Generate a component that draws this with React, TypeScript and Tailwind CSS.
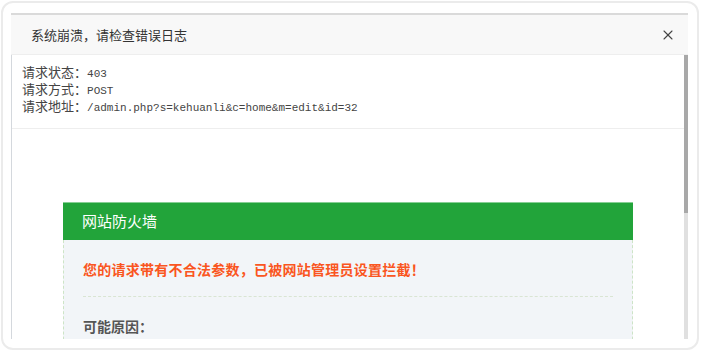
import { X } from "lucide-react";

const cjk = "font-['Noto_Sans_CJK_SC','Noto_Sans',sans-serif]";
const mono = "font-['Liberation_Mono',monospace] text-[11px]";

function InfoLine({ label, value }: { label: string; value: string }) {
  return (
    <div className="h-[17px] leading-[17px] text-[13px] whitespace-nowrap font-['Liberation_Sans','Noto_Sans_CJK_SC',sans-serif]">
      {label}：<span className={mono}>{value}</span>
    </div>
  );
}

export default function App() {
  return (
    <div className={`w-[707px] h-[352px] bg-white pt-[1px] pl-[1px] ${cjk}`}>
      <div className="w-[698px] h-[349px] border-2 border-[#ebebeb] rounded-[12px] pl-[8px] pt-[10px] overflow-hidden">
        {/* Dialog */}
        <div className="w-[677px] h-[326px] flex flex-col border-t-2 border-[#dadada] overflow-hidden">
          {/* Header */}
          <div className="h-[40px] shrink-0 bg-[#f8f8f8] border-b border-[#eeeeee] flex items-center justify-between pl-[20px] pr-[12px]">
            <span className="text-[13px] text-[#333]">系统崩溃，请检查错误日志</span>
            <X size={16} strokeWidth={1.6} className="text-[#444]" />
          </div>

          {/* Body */}
          <div className="flex-1 flex min-h-0">
            <div className="flex-1 border-l border-[#d4d8dd] overflow-hidden">
              <div className="pl-[10px] pt-[9px] pb-[13px] text-[#444] border-b border-[#eeeeee]">
                <InfoLine label="请求状态" value="403" />
                <InfoLine label="请求方式" value="POST" />
                <InfoLine label="请求地址" value="/admin.php?s=kehuanli&c=home&m=edit&id=32" />
              </div>

              {/* Firewall box */}
              <div className="mx-[51px] mt-[73px]">
                <div className="h-[38px] bg-[#22a43a] border-t border-[#86cf94] flex items-center pl-[19px]">
                  <span className="text-[15px] text-white">网站防火墙</span>
                </div>
                <div className="bg-[#f2f5f8] border-x border-dashed border-[#cde4c6] px-[19px] pt-[18px] h-[120px]">
                  <div className="text-[14px] leading-[22px] font-bold text-[#fa5521] whitespace-nowrap tracking-[0.25px]">
                    您的请求带有不合法参数，已被网站管理员设置拦截！
                  </div>
                  <div className="mt-[16px] border-t border-dashed border-[#d9e5d3]" />
                  <div className="mt-[18px] text-[14px] leading-[22px] font-bold text-[#555]">可能原因：</div>
                </div>
              </div>
            </div>

            {/* Scrollbar */}
            <div className="w-[4px] flex flex-col">
              <div className="h-[158px] bg-[#a8a8a8]" />
              <div className="flex-1 bg-[#e0e0e0]" />
            </div>
          </div>
        </div>
      </div>
    </div>
  );
}
